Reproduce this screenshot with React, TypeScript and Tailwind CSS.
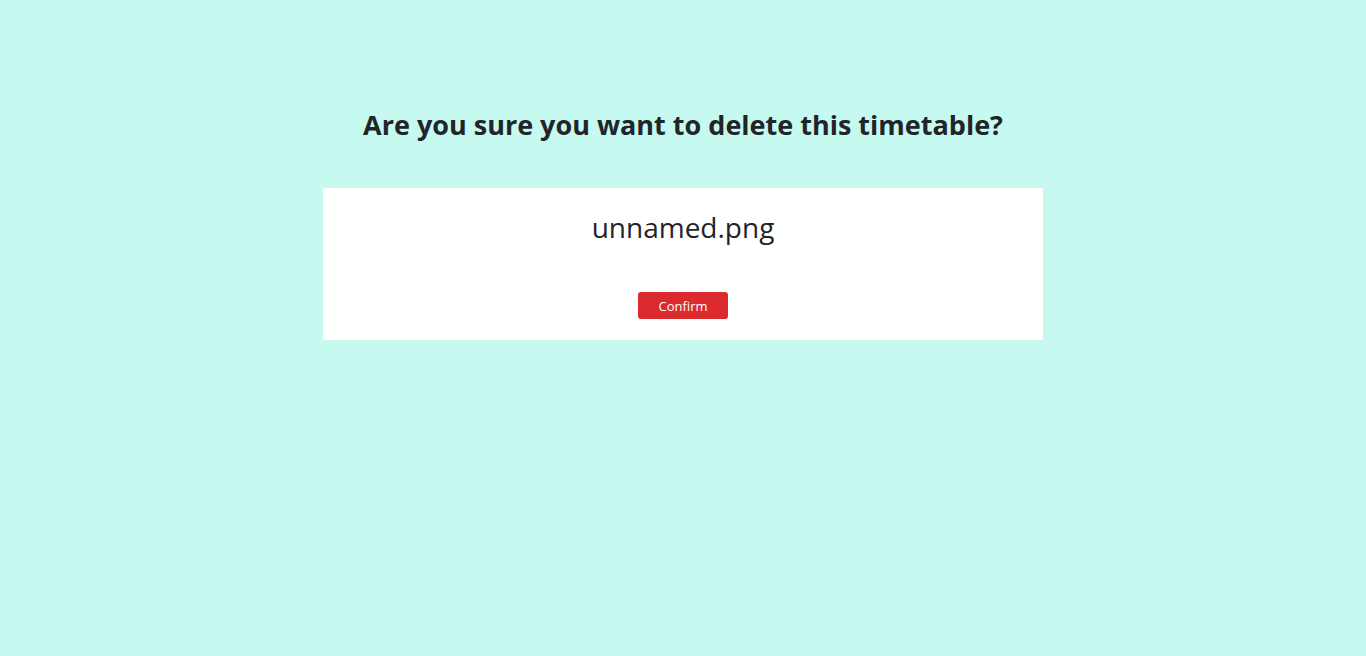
export default function App() {
  return (
    <div
      className="min-h-[656px] w-full bg-[#c6f9ef] text-[#212529]"
      style={{ fontFamily: '"Open Sans", "Noto Sans", sans-serif' }}
    >
      <div className="flex flex-col items-center pt-[104px]">
        <h2 className="text-[27px] leading-[42px] font-bold">
          Are you sure you want to delete this timetable?
        </h2>
        <div className="mt-[42px] flex w-[720px] flex-col items-center bg-white pt-[19px] pb-[21px]">
          <h3 className="text-[28px] leading-[40px]">unnamed.png</h3>
          <button className="mt-[45px] h-[27px] w-[90px] rounded-[3px] bg-[#dc2b2e] pt-[2px] text-[13px] leading-[25px] text-white">
            Confirm
          </button>
        </div>
      </div>
    </div>
  );
}
